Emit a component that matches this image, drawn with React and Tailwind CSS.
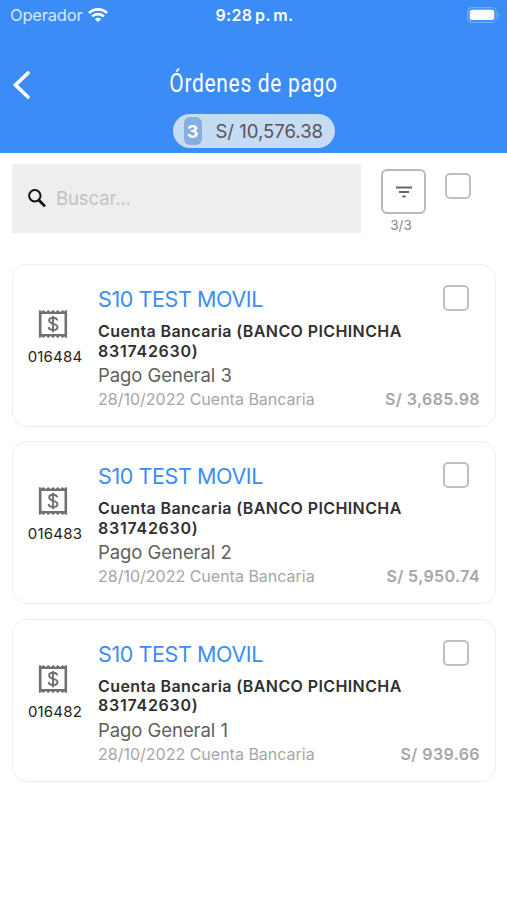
import React from 'react';

const ORDERS = [
  { id: '016484', concept: 'Pago General 3', amount: 'S/ 3,685.98' },
  { id: '016483', concept: 'Pago General 2', amount: 'S/ 5,950.74' },
  { id: '016482', concept: 'Pago General 1', amount: 'S/ 939.66' },
];

const Checkbox = () => (
  <button
    type="button"
    role="checkbox"
    aria-checked="false"
    aria-label="Seleccionar"
    className="block h-[26px] w-[26px] shrink-0 rounded-[5px] border-2 border-[#bfbfbf] bg-white"
  />
);

const WifiIcon = () => (
  <svg width="20" height="14" viewBox="0 0 20 14" fill="none" stroke="white" strokeWidth="2.6">
    <path d="M1 5C6 .2 14 .2 19 5" />
    <path d="M4.1 8.4C7.4 5.4 12.6 5.4 15.9 8.4" />
    <path d="M10 14 6.8 10.9C8.6 9.3 11.4 9.3 13.2 10.9Z" fill="white" stroke="none" />
  </svg>
);

const BatteryIcon = () => (
  <svg width="33" height="16" viewBox="0 0 33 16" fill="none">
    <rect x="0.7" y="0.7" width="28.6" height="14.6" rx="4.5" stroke="white" strokeOpacity="0.3" strokeWidth="1.2" />
    <rect x="2.7" y="2.7" width="24.6" height="10.3" rx="2.5" fill="white" />
    <path d="M31 5.5c1.6.6 1.6 4.4 0 5z" fill="white" fillOpacity="0.35" />
  </svg>
);

/* Receipt with serrated top and bottom edges */
const ReceiptIcon = () => (
  <svg width="30" height="30" viewBox="0 0 30 30" fill="none" stroke="#707070">
    <path d="M2.2 1.5v27M27.8 1.5v27" strokeWidth="2.6" />
    <path d="M2 4.2h26M2 25.8h26" strokeWidth="1.8" />
    <path
      d="M1 1l2 2 2.4-2 2.4 2 2.4-2 2.4 2L15 1l2.4 2 2.4-2 2.4 2 2.4-2L27 3l2-2v3H1zM1 29l2-2 2.4 2 2.4-2 2.4 2 2.4-2L15 29l2.4-2 2.4 2 2.4-2 2.4 2 2.4-2 2 2v-3H1z"
      fill="#707070"
      stroke="none"
    />
    <path
      d="M19.3 11.4c-.4-1.8-2-2.6-4.2-2.6-2.4 0-4 1-4 2.8 0 4.2 8.4 2.2 8.4 6.4 0 2-1.8 3-4.3 3-2.6 0-4.3-1-4.6-3M15 6.7v16.5"
      strokeWidth="1.9"
    />
  </svg>
);

const OrderCard = ({ order }) => (
  <article className="flex h-[163px] rounded-[15px] border-[1.5px] border-[#eeeeee] bg-white">
    <div className="flex w-[85px] shrink-0 flex-col items-center pt-[44px] pr-px">
      <div className="mr-[4px]">
        <ReceiptIcon />
      </div>
      <span className="mt-[8px] text-[15px] leading-5 tracking-[0.2px] text-[#222]">{order.id}</span>
    </div>
    <div className="flex-1 pt-5 pr-[15px]">
      <div className="flex h-[37px] justify-between pr-[11px]">
        <h2 className="text-[21.5px] leading-[28px] tracking-[-0.4px] text-[#3b8cf5]">S10 TEST MOVIL</h2>
        <Checkbox />
      </div>
      <p className="text-[16px] leading-[19.5px] font-semibold tracking-[0.4px] text-[#303030]">
        Cuenta Bancaria (BANCO PICHINCHA
        <br />
        <span className="tracking-[0.75px]">831742630)</span>
      </p>
      <p className="mt-[2px] text-[18.5px] leading-6 tracking-[-0.06px] text-[#606060]">{order.concept}</p>
      <div className="flex justify-between text-[16px] leading-6 whitespace-nowrap text-[#a6a6a6]">
        <span>28/10/2022 Cuenta Bancaria</span>
        <span className="font-semibold tracking-[0.4px]">{order.amount}</span>
      </div>
    </div>
  </article>
);

const App = () => (
  <div className="h-[900px] w-[507px] overflow-hidden bg-white font-['Inter',sans-serif]">
    <header className="h-[153px] bg-[#3b8cf6] text-white">
      {/* Status bar */}
      <div className="grid h-[30px] grid-cols-3 items-center pr-[7px] pl-[10px]">
        <div className="flex items-center gap-[6px]">
          <span className="text-[16.5px] leading-5 tracking-[-0.2px] text-[#d9e9ff]">Operador</span>
          <WifiIcon />
        </div>
        <span className="pr-px text-center text-[16px] leading-5 font-semibold tracking-[0.3px] [word-spacing:-1.5px]">
          9:28 p. m.
        </span>
        <div className="flex justify-end pb-px">
          <BatteryIcon />
        </div>
      </div>

      {/* Title */}
      <div className="mt-[37px] grid h-[36px] grid-cols-[40px_1fr_40px] items-center">
        <button type="button" aria-label="Volver" className="pb-px pl-[11px]">
          <svg width="20" height="30" viewBox="0 0 20 30" fill="none" stroke="white" strokeWidth="3.7" strokeLinecap="round">
            <path d="M17 3 4.5 15 17 27" />
          </svg>
        </button>
        <h1 className="origin-center scale-x-[0.84] pb-[2px] text-center font-['Roboto',sans-serif] text-[25px] leading-8 tracking-[0.8px] whitespace-nowrap">
          Órdenes de pago
        </h1>
      </div>

      <div className="mx-auto mt-[11px] flex h-[34px] w-[162px] items-center rounded-full bg-[#c7dbf5]">
        <span className="ml-[11px] flex h-7 w-[18px] items-center justify-center rounded-[6px] bg-[#88addf] text-[18px] font-bold">
          3
        </span>
        <span className="ml-[14px] pt-px text-[18.5px] whitespace-nowrap text-[#555]">S/ 10,576.38</span>
      </div>
    </header>

    {/* Search and filter */}
    <div className="flex h-[111px] px-3 pt-[11px]">
      <div className="flex h-[69px] w-[349px] items-center bg-[#eeeeee] pl-[16px]">
        <svg width="18" height="19" viewBox="0 0 18 19" fill="none" stroke="#111">
          <circle cx="6.8" cy="6.8" r="5.7" strokeWidth="2" />
          <path d="M11 11.2l6 6.2" strokeWidth="2.8" />
        </svg>
        <input
          placeholder="Buscar..."
          className="ml-[10px] w-60 bg-transparent pt-px text-[18.5px] tracking-[-0.1px] outline-none placeholder:text-[#c2c2c2]"
        />
      </div>
      <div className="ml-5 flex w-[45px] flex-col items-center pt-[5px]">
        <button
          type="button"
          aria-label="Filtrar"
          className="flex h-[45px] w-[45px] items-center justify-center rounded-[6px] border-2 border-[#b9b9b9]"
        >
          <svg width="16" height="12" viewBox="0 0 16 12" fill="none" stroke="#666" strokeWidth="1.8">
            <path d="M0 1.5h16M3 6h10M6.3 10.5h3.4" />
          </svg>
        </button>
        <span className="mt-[2px] pr-[5px] text-[13.5px] leading-[18px] text-[#888]">3/3</span>
      </div>
      <div className="ml-[19px] pt-[9px]">
        <Checkbox />
      </div>
    </div>

    <main className="flex flex-col gap-[14.3px] pr-[11px] pl-3">
      {ORDERS.map((order) => (
        <OrderCard key={order.id} order={order} />
      ))}
    </main>
  </div>
);

export default App;
